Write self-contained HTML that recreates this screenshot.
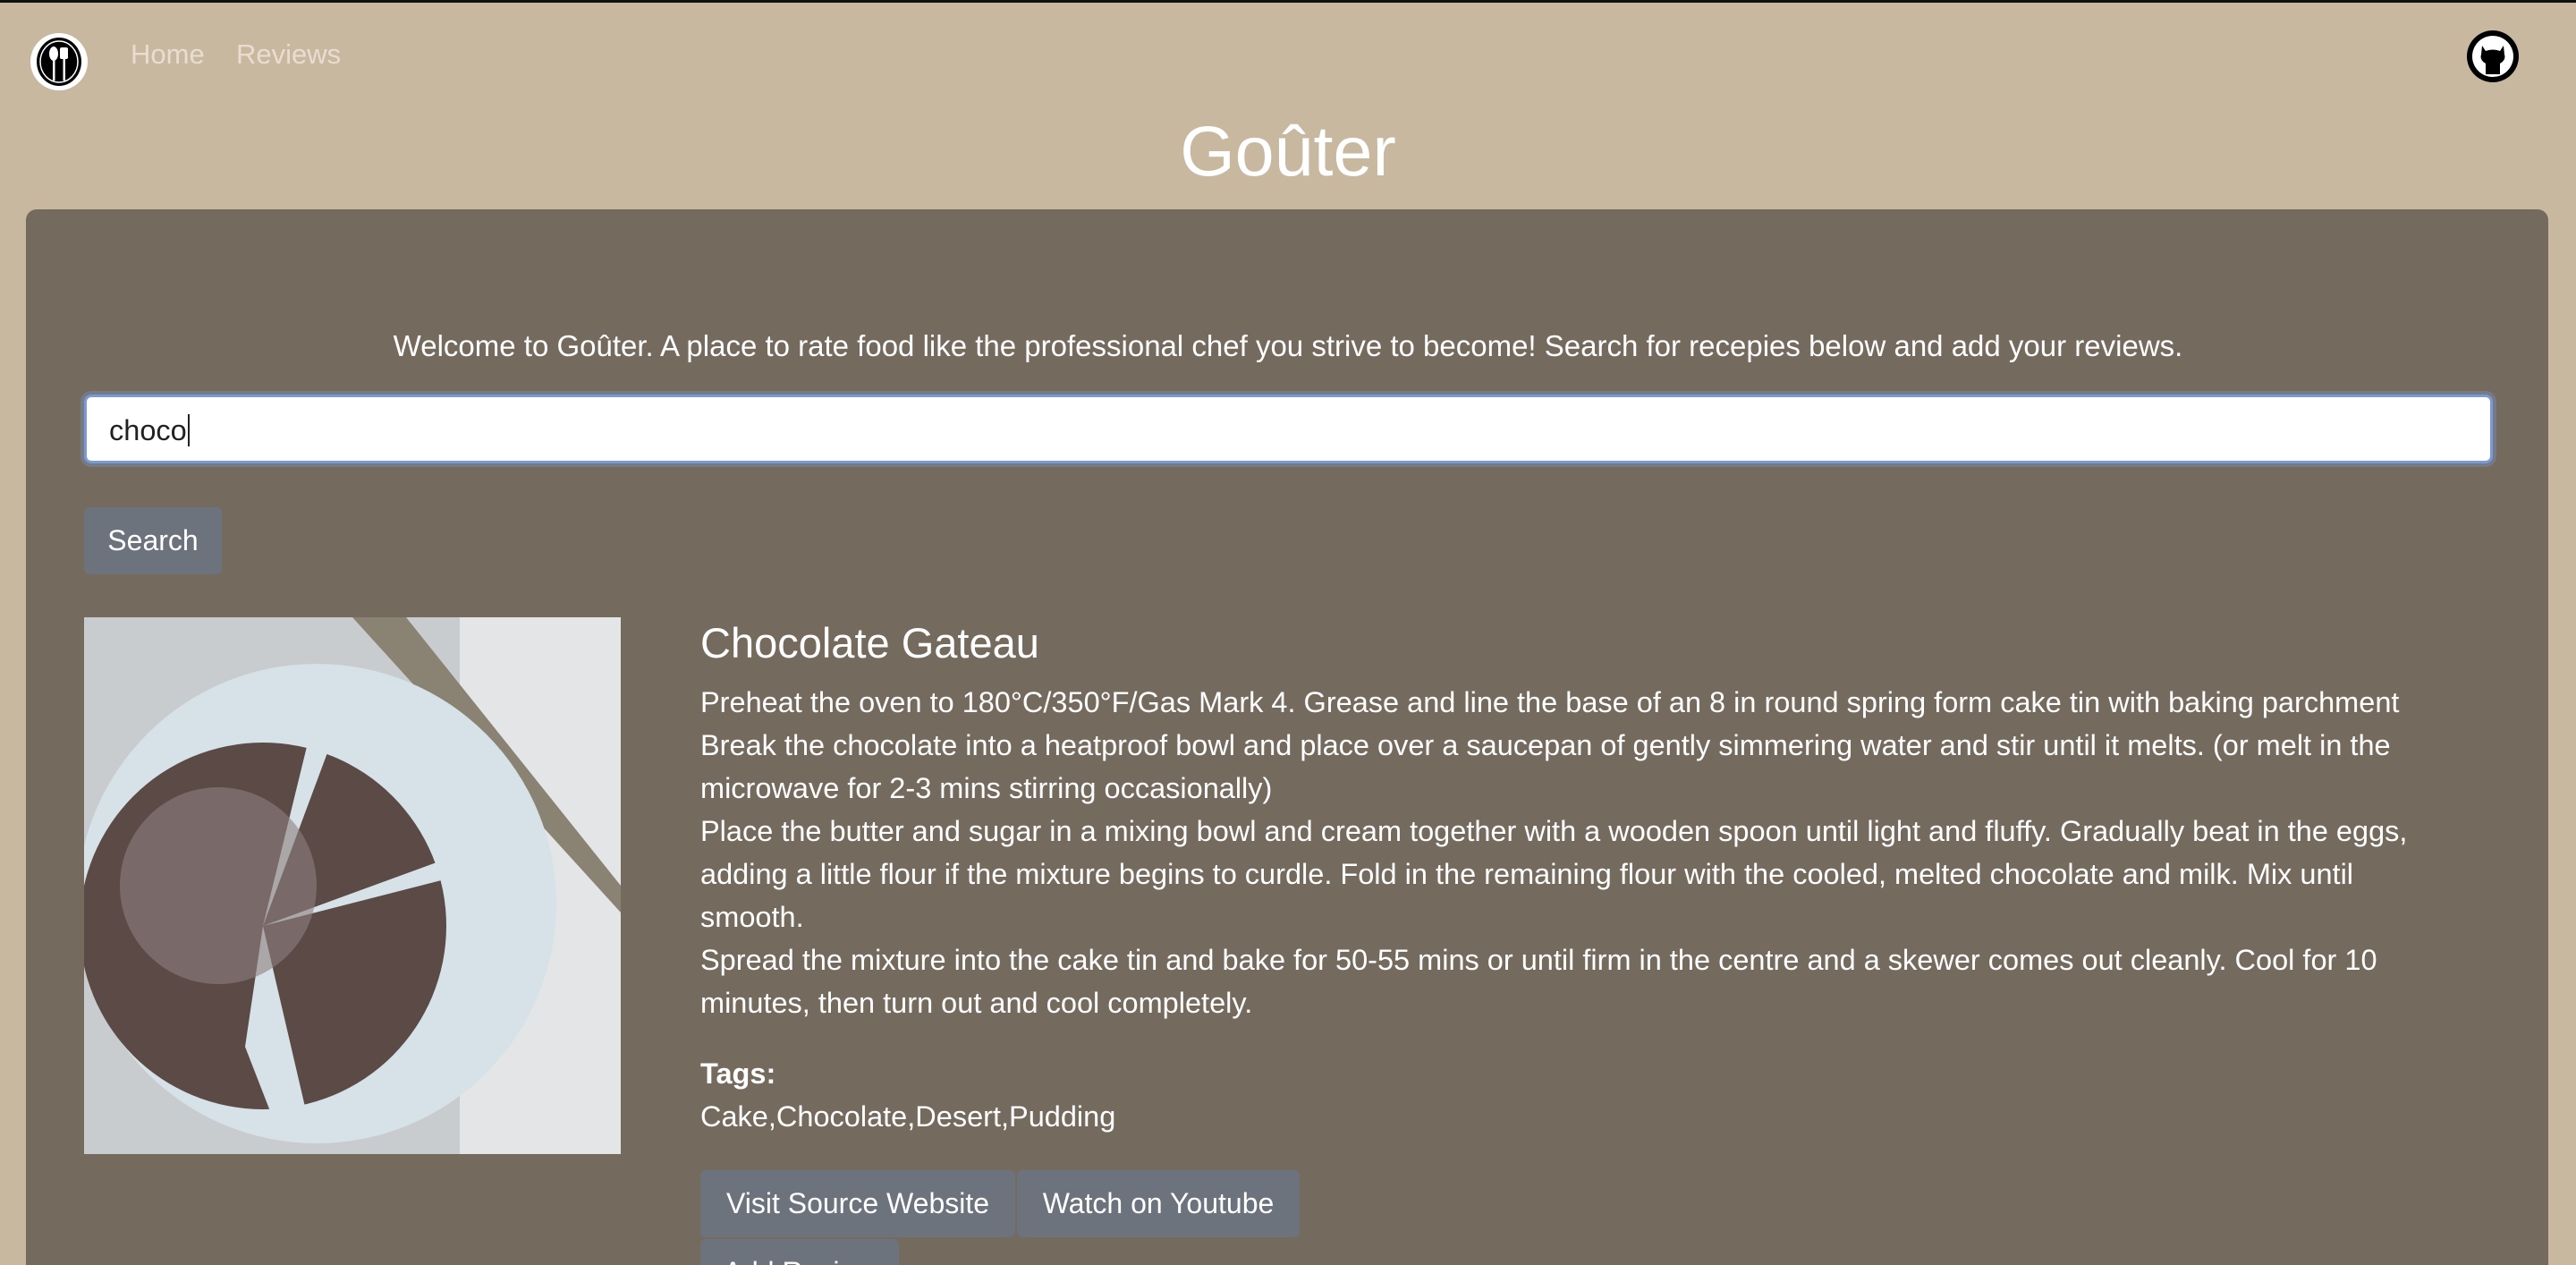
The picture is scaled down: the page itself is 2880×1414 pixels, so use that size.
<!DOCTYPE html>
<html><head><meta charset="utf-8">
<style>
*{box-sizing:border-box;margin:0;padding:0}
html,body{width:2880px;height:1414px;overflow:hidden}
body{background:#c9b8a0;font-family:"Liberation Sans",sans-serif;position:relative;border-top:3px solid #111;}
.nav{position:absolute;left:0;top:0;width:2880px;height:120px}
.logo{position:absolute;left:33px;top:33px}
.nl{position:absolute;top:40px;font-size:31px;color:#e8ddd0}
.gh{position:absolute;left:2757px;top:30px}
h1{position:absolute;left:0;width:2880px;top:120px;text-align:center;font-weight:400;font-size:79px;color:#fff}
.card{position:absolute;left:29px;top:231px;width:2820px;height:1200px;background:#756a5e;border-radius:12px}
.welcome{position:absolute;left:0;width:2880px;top:365px;text-align:center;color:#fff;font-size:33px}
.input{position:absolute;left:94px;top:438px;width:2693px;height:77px;background:#fff;border:3px solid #7a9ad6;border-radius:8px;box-shadow:0 0 0 4px rgba(120,150,210,.35);font-size:32.5px;color:#222;padding:19px 0 0 25px}
.btn{position:absolute;background:#6c737c;color:#fff;font-size:32px;border-radius:6px;text-align:center}
.img{position:absolute;left:94px;top:687px;width:600px;height:600px}
.title{position:absolute;left:783px;top:688px;font-size:47px;color:#fff}
.body{position:absolute;left:783px;top:758px;width:1960px;font-size:32.5px;line-height:48px;color:#fff}
</style></head><body>
<div class="nav">
<svg class="logo" width="66" height="66" viewBox="0 0 66 66"><circle cx="33" cy="33" r="32" fill="#fff"/><ellipse cx="33" cy="33" rx="25" ry="27" fill="#000"/><ellipse cx="33" cy="33" rx="21" ry="23" fill="none" stroke="#fff" stroke-width="1.5"/><ellipse cx="27" cy="24" rx="5" ry="8" fill="#fff"/><rect x="26" y="30" width="2.5" height="24" fill="#fff"/><rect x="34" y="17" width="9" height="13" rx="2" fill="#fff"/><rect x="37.5" y="28" width="2.5" height="26" fill="#fff"/></svg>
<div class="nl" style="left:146px">Home</div>
<div class="nl" style="left:264px">Reviews</div>
<svg class="gh" width="60" height="60" viewBox="0 0 60 60"><circle cx="30" cy="30" r="29" fill="#000"/><circle cx="30" cy="30" r="23" fill="#fff"/><path d="M18 18 L22 24 Q30 21 38 24 L42 18 L43 28 Q45 34 38 38 L38 50 L22 50 L22 38 Q15 34 17 28 Z" fill="#000"/></svg>
</div>
<h1>Goûter</h1>
<div class="card"></div>
<div class="welcome">Welcome to Goûter. A place to rate food like the professional chef you strive to become! Search for recepies below and add your reviews.</div>
<div class="input">choco<span style="border-left:2px solid #222;margin-left:1px"></span></div>
<div class="btn" style="left:94px;top:564px;width:154px;height:75px;line-height:75px">Search</div>
<svg class="img" viewBox="0 0 600 600">
<rect width="600" height="600" fill="#c9ccce"/>
<rect x="420" y="0" width="180" height="600" fill="#e3e5e6"/>
<path d="M300 0 L360 0 L600 300 L600 330 Z" fill="#8a8272"/>
<circle cx="260" cy="320" r="268" fill="#d6e2e7"/>
<circle cx="200" cy="345" r="205" fill="#5b4a46"/>
<path d="M200 345 L255 120 L280 130 Z" fill="#d6e2e7"/>
<path d="M200 345 L405 270 L415 290 Z" fill="#d6e2e7"/>
<path d="M200 345 L250 560 L215 570 L180 480 Z" fill="#d6e2e7"/>
<circle cx="150" cy="300" r="110" fill="#8d8180" opacity=".6"/>
</svg>
<div class="title">Chocolate Gateau</div>
<div class="body">Preheat the oven to 180°C/350°F/Gas Mark 4. Grease and line the base of an 8 in round spring form cake tin with baking parchment<br>Break the chocolate into a heatproof bowl and place over a saucepan of gently simmering water and stir until it melts. (or melt in the microwave for 2-3 mins stirring occasionally)<br>Place the butter and sugar in a mixing bowl and cream together with a wooden spoon until light and fluffy. Gradually beat in the eggs, adding a little flour if the mixture begins to curdle. Fold in the remaining flour with the cooled, melted chocolate and milk. Mix until smooth.<br>Spread the mixture into the cake tin and bake for 50-55 mins or until firm in the centre and a skewer comes out cleanly. Cool for 10 minutes, then turn out and cool completely.
<div style="margin-top:31px;font-weight:700">Tags:</div>
<div>Cake,Chocolate,Desert,Pudding</div></div>
<div class="btn" style="left:783px;top:1305px;width:352px;height:75px;line-height:75px">Visit Source Website</div>
<div class="btn" style="left:1137px;top:1305px;width:316px;height:75px;line-height:75px">Watch on Youtube</div>
<div class="btn" style="left:783px;top:1382px;width:222px;height:75px;line-height:75px">Add Review</div>
</body></html>
